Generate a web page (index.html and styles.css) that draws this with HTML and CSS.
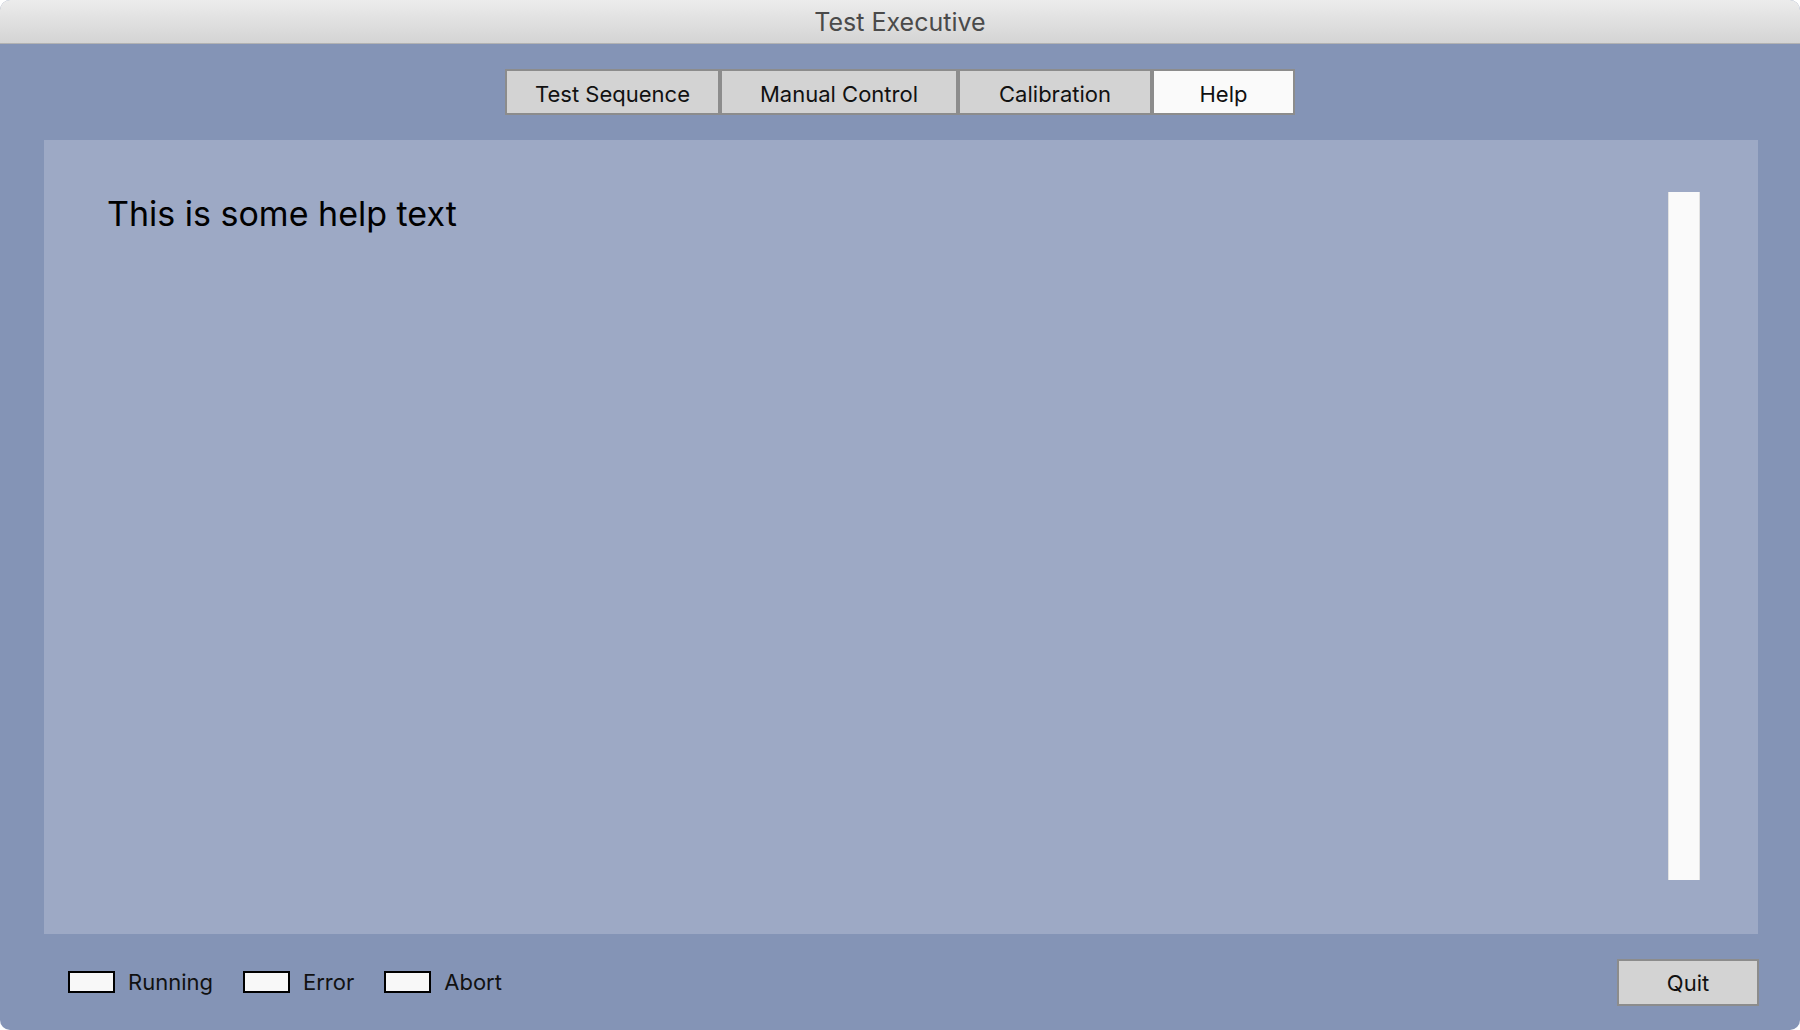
FILE: index.html
```html
<!DOCTYPE html>
<html lang="en">
<head>
<meta charset="UTF-8">
<meta name="viewport" content="width=device-width, initial-scale=1.0">
<title>Test Executive</title>
<link rel="stylesheet" href="styles.css">
</head>
<body>

<div class="window">
    <div class="titlebar">Test Executive</div>

    <div class="tabs">
        <div class="tab tab-sequence">Test Sequence</div>
        <div class="tab tab-manual">Manual Control</div>
        <div class="tab tab-calibration">Calibration</div>
        <div class="tab tab-help active">Help</div>
    </div>

    <div class="panel">
        <div class="help-text">This is some help text</div>
        <div class="scrollbar"></div>
    </div>

    <div class="footer">
        <div class="status">
            <div class="indicator"><span class="lamp"></span>Running</div>
            <div class="indicator"><span class="lamp"></span>Error</div>
            <div class="indicator"><span class="lamp"></span>Abort</div>
        </div>
        <button class="quit">Quit</button>
    </div>
</div>

</body>
</html>
```

FILE: styles.css
```css
body {
    margin: 0;
    padding: 0;
    background-color: #ffffff;
    font-family: Inter, "Liberation Sans", Arial, sans-serif;
}

.window {
    width: 1800px;
    height: 1030px;
    border-radius: 10px;
    overflow: hidden;
    background-color: #8494b6;
    display: flex;
    flex-direction: column;
}

.titlebar {
    height: 43px;
    line-height: 45px;
    text-align: center;
    font-size: 25px;
    color: #4a4a4a;
    background: linear-gradient(#ececec, #d4d4d4);
    border-bottom: 1px solid #b2b2b2;
}

.tabs {
    display: flex;
    justify-content: center;
    margin-top: 25px;
}

.tab {
    box-sizing: border-box;
    height: 46px;
    line-height: 46px;
    text-align: center;
    font-size: 22px;
    color: #111;
    background-color: #d3d3d3;
    border: 2px solid #8c8c8c;
}

.tab-sequence { width: 215px; }
.tab-manual { width: 238px; }
.tab-calibration { width: 194px; }
.tab-help { width: 143px; }

.tab.active {
    background-color: #fafafa;
}

.panel {
    box-sizing: border-box;
    height: 794px;
    margin: 25px 42px 0 44px;
    padding: 52px 58px 54px 63px;
    background-color: #9da9c5;
    display: flex;
}

.help-text {
    flex: 1;
    font-size: 34px;
    color: #000;
    padding-top: 1px;
}

.scrollbar {
    width: 32px;
    box-sizing: border-box;
    background-color: #fafafa;
    border-left: 1px solid #e2e2e2;
    border-right: 1px solid #e2e2e2;
}

.footer {
    flex: 1;
    display: flex;
    align-items: center;
    justify-content: space-between;
    padding: 0 41px 0 68px;
}

.status {
    display: flex;
    gap: 30px;
}

.indicator {
    display: flex;
    align-items: center;
    gap: 13px;
    font-size: 22px;
    color: #111;
}

.lamp {
    display: inline-block;
    box-sizing: border-box;
    width: 47px;
    height: 22px;
    background-color: #f8f8f8;
    border: 2px solid #000;
}

.quit {
    box-sizing: border-box;
    width: 142px;
    height: 47px;
    font-family: inherit;
    font-size: 22px;
    color: #111;
    background-color: #d3d3d3;
    border: 2px solid #8c8c8c;
    padding: 2px 0 0 0;
}
```
